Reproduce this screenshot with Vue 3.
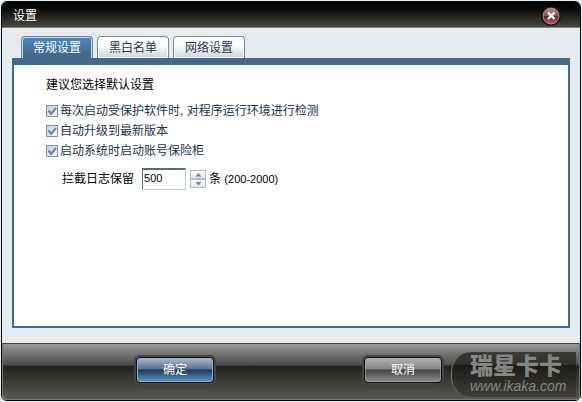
<script setup>
import { ref } from 'vue'

const tabs = ['常规设置', '黑白名单', '网络设置']
const activeTab = ref(0)
const options = ref([
  { id: 'check-env', label: '每次启动受保护软件时, 对程序运行环境进行检测', checked: true },
  { id: 'auto-update', label: '自动升级到最新版本', checked: true },
  { id: 'run-at-boot', label: '启动系统时启动账号保险柜', checked: true },
])
const logCount = ref(500)

function step(delta) {
  logCount.value = Math.min(2000, Math.max(200, Number(logCount.value) + delta))
}
</script>

<template>
  <div class="stage">
    <main class="dialog">
      <header class="titlebar">
        <h1>设置</h1>
        <button class="close" type="button" aria-label="关闭">
          <svg viewBox="0 0 20 20" width="20" height="20">
            <defs>
              <linearGradient id="ball" x1="0" y1="0" x2="0" y2="1">
                <stop offset="0" stop-color="#b08a8f" />
                <stop offset=".48" stop-color="#8a5058" />
                <stop offset=".52" stop-color="#64262f" />
                <stop offset="1" stop-color="#a8626b" />
              </linearGradient>
            </defs>
            <circle cx="10" cy="10" r="9.8" fill="#1b0d0f" />
            <circle cx="10" cy="10" r="8" fill="url(#ball)" stroke="#b08a8e" stroke-width="1" />
            <path d="M7 6.5l6.5 6.5M13.5 6.5L7 13" stroke="#fff" stroke-width="2.4" />
          </svg>
        </button>
      </header>

      <section class="content">
        <nav class="tabs" role="tablist">
          <button
            v-for="(tab, i) in tabs"
            :key="tab"
            type="button"
            role="tab"
            class="tab"
            :class="{ active: i === activeTab }"
            :aria-selected="i === activeTab"
            @click="activeTab = i"
          >{{ tab }}</button>
        </nav>
        <div class="panel">
          <p class="hint">建议您选择默认设置</p>
          <ul class="options">
            <li v-for="option in options" :key="option.id">
              <span class="box">
                <input :id="option.id" v-model="option.checked" type="checkbox" />
                <svg v-if="option.checked" viewBox="0 0 12 12" width="12" height="12">
                  <path d="M2.5 5.5l2.7 3.3L10 3" fill="none" stroke="#6d87a8" stroke-width="2.2" />
                </svg>
              </span>
              <label :for="option.id">{{ option.label }}</label>
            </li>
          </ul>
          <div class="log">
            <label for="log-count">拦截日志保留</label>
            <input id="log-count" v-model="logCount" class="count" type="text" inputmode="numeric" />
            <span class="spinner">
              <button type="button" aria-label="增加" @click="step(100)">
                <svg viewBox="0 0 7 4" width="7" height="4"><path d="M3.5 0L6.5 3.5h-6z" fill="#6b7bac" /></svg>
              </button>
              <button type="button" aria-label="减少" @click="step(-100)">
                <svg viewBox="0 0 7 4" width="7" height="4"><path d="M.5 0h6l-3 3.5z" fill="#6b7bac" /></svg>
              </button>
            </span>
            <span class="unit">条 <span class="range">(200-2000)</span></span>
          </div>
        </div>
      </section>

      <footer class="footer">
        <button class="action primary" type="button">确定</button>
        <button class="action" type="button">取消</button>
        <div class="brand">
          <span class="brand-name">瑞星卡卡</span>
          <span class="brand-url">www.ikaka.com</span>
        </div>
      </footer>
    </main>
  </div>
</template>

<style>
body {
  background: #e9eef2;
}
</style>

<style scoped>
.stage {
  box-sizing: border-box;
  display: flex;
  min-height: 100vh;
  padding: 1px;
  font: 12px/16px "Liberation Sans", "Noto Sans CJK SC", sans-serif;
  color: #000;
}

.dialog {
  flex: 1;
  display: flex;
  flex-direction: column;
  border: 1px solid #05080a;
  border-radius: 6px;
  overflow: hidden;
  background: #e7ebed;
}

button,
input {
  box-sizing: border-box;
  margin: 0;
  padding: 0;
  font: inherit;
}

.titlebar {
  box-sizing: border-box;
  height: 26px;
  display: flex;
  align-items: center;
  justify-content: space-between;
  padding: 2px 19px 0 11px;
  border-bottom: 1px solid #85867f;
  background: linear-gradient(#000, #0b0b09 30%, #48463e);
  color: #fff;
}

h1 {
  margin: 0;
  font: inherit;
}

.close {
  display: flex;
  border: 0;
  background: none;
}

.content {
  flex: 1;
  display: flex;
  flex-direction: column;
  padding: 8px 10px 15px;
}

.tabs {
  display: flex;
  gap: 4px;
  padding-left: 9px;
}

.tab {
  width: 72px;
  height: 22px;
  border: 1px solid #6e8ba6;
  border-bottom: 0;
  border-radius: 4px 4px 0 0;
  background: linear-gradient(#fff 35%, #c9d8e5);
  box-shadow: inset 0 0 0 1px #fff;
  color: #1e3851;
}

.tab.active {
  background: linear-gradient(#4a8ac0, #45698a 80%);
  box-shadow: inset 1px 1px #b9d5e9, inset -1px 0 #b9d5e9;
  color: #fff;
}

.panel {
  flex: 1;
  padding: 12px 32px;
  border: 2px solid #45698a;
  border-top-width: 7px;
  background: #fff;
}

.hint {
  margin: 0 0 8px;
}

.options {
  margin: 0;
  padding: 0;
  list-style: none;
}

.options li {
  display: flex;
  align-items: center;
  gap: 2px;
  height: 20px;
  color: #1c3348;
}

.box {
  position: relative;
  display: flex;
  width: 12px;
  height: 12px;
}

.box input {
  appearance: none;
  width: 12px;
  height: 12px;
  border: 1px solid #7c92a8;
  background: linear-gradient(135deg, #c9d2dc, #f4f7f9);
}

.box svg {
  position: absolute;
  inset: 0;
  pointer-events: none;
}

.log {
  display: flex;
  align-items: center;
  margin-top: 7px;
  padding-left: 16px;
}

.count {
  width: 44px;
  height: 22px;
  margin: 0 4px 0 8px;
  padding: 0 1px 4px;
  border: 1px solid #b9d0dc;
  border-top: 2px solid #4b7085;
  border-left-color: #4b7085;
  background: #fff;
  font-size: 11px;
}

.spinner {
  display: flex;
  flex-direction: column;
  margin-right: 3px;
}

.spinner button {
  display: flex;
  align-items: center;
  justify-content: center;
  width: 16px;
  height: 9px;
  border: 1px solid #b4b9c4;
  background: linear-gradient(#fff, #e3e6ec);
}

.range {
  font-size: 11px;
}

.footer {
  display: grid;
  grid-template-columns: 1fr 1fr;
  align-items: center;
  position: relative;
  box-sizing: border-box;
  height: 57px;
  padding: 0 63px 0 59px;
  border-top: 1px solid #3e3e3c;
  border-radius: 0 0 5px 5px;
  background: linear-gradient(#979797, #4a4a49 38%, #22211e 39%, #35342f 60%, #5a5952);
  box-shadow: inset 1px -1px #77776f, inset -1px 0 #77776f;
}

.action {
  justify-self: center;
  width: 78px;
  height: 26px;
  margin-bottom: 4px;
  border: 1px solid #101214;
  border-radius: 4px;
  background: linear-gradient(#b3b3b3, #858585 45%, #444 50%, #8e8e8e);
  box-shadow: inset 0 0 0 1px #aaa9, 0 0 0 2px #454544;
  color: #fff;
}

.primary {
  background: linear-gradient(#b2bac8, #5c7290 45%, #173a5c 50%, #5c9dc2);
  box-shadow: inset 0 0 0 1px #8cb0c8, 0 0 0 2px #454544;
}

.brand {
  position: absolute;
  right: 4px;
  bottom: 3px;
  box-sizing: border-box;
  display: flex;
  flex-direction: column;
  width: 125px;
  height: 45px;
  padding: 3px 0 0 18px;
  border-left: 1px solid #77776f;
  border-radius: 20px 0 0 20px;
  background: linear-gradient(#393938, #30302e 28%, #1c1b18 30%, #3e3d38);
  color: #858582;
}

.brand-name {
  font-size: 23px;
  line-height: 23px;
  font-weight: 900;
}

.brand-url {
  font-size: 14px;
  line-height: 16px;
  font-style: italic;
}
</style>
